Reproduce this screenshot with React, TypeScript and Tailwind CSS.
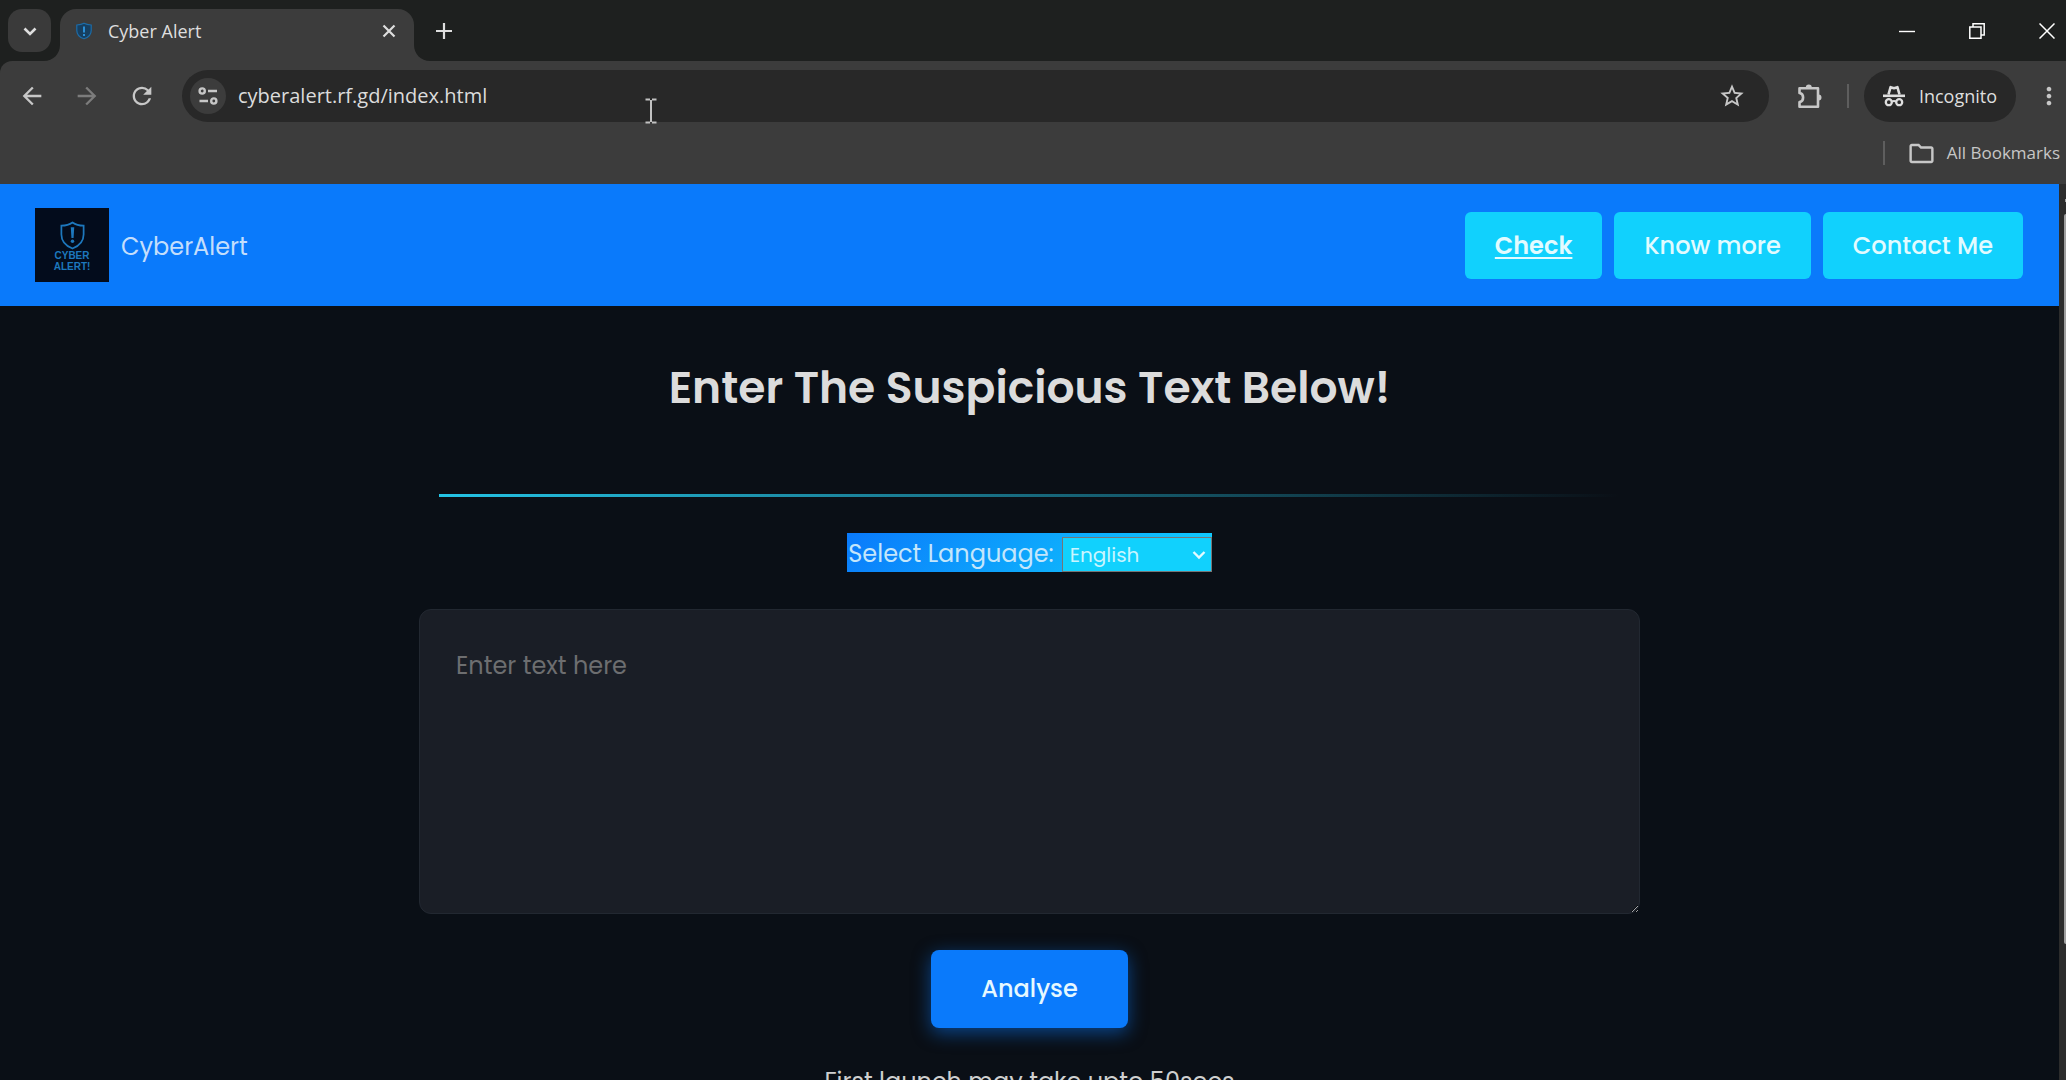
import { useState } from "react";
import {
  MdArrowBack,
  MdArrowForward,
  MdMoreVert,
  MdOutlineFolder,
  MdRefresh,
  MdStarBorder,
} from "react-icons/md";

const NAV_LINKS = [
  { label: "Check", href: "#check", active: true },
  { label: "Know more", href: "#know-more", active: false },
  { label: "Contact Me", href: "#contact", active: false },
];

const LANGUAGES = ["English", "Hindi", "Marathi", "Gujarati"];

function ShieldIcon({ className }: { className?: string }) {
  return (
    <svg viewBox="0 0 26 30" fill="none" className={className}>
      <path
        d="M13 1.5C9.5 4 5.500 4.800 1.500 4.800V14C1.500 21 6.500 26 13 28.500C19.500 26 24.500 21 24.500 14V4.800C20.500 4.800 16.500 4 13 1.500Z"
        stroke="currentColor"
        strokeWidth="1.8"
      />
      <path d="M11.200 6.500h3.600l-.7 11h-2.200z" fill="currentColor" />
      <circle cx="13" cy="21" r="1.800" fill="currentColor" />
    </svg>
  );
}

function FaviconIcon() {
  return (
    <svg viewBox="0 0 18 18" fill="none" className="size-[18px] text-[#1c6ca8]">
      <path
        d="M9 1.200C6.500 2.500 4 2.800 1.800 3V8.500C1.800 12.500 4.800 15.500 9 16.800C13.200 15.500 16.200 12.500 16.200 8.500V3C14 2.800 11.500 2.500 9 1.200Z"
        fill="#173f60"
        stroke="currentColor"
        strokeWidth="1.200"
      />
      <path d="M9 4.500v6M9 12v2" stroke="#2b8fd6" strokeWidth="2" />
    </svg>
  );
}

function TuneIcon() {
  return (
    <svg viewBox="0 0 20 20" fill="none" stroke="currentColor" strokeWidth="2.400" className="size-5">
      <circle cx="4.200" cy="5" r="2.600" />
      <path d="M10 5H19M1.500 15h8.500" />
      <circle cx="15.800" cy="15" r="2.600" />
    </svg>
  );
}

function PuzzleIcon() {
  return (
    <svg viewBox="0 0 26 26" fill="none" className="size-[26px]">
      <path
        d="M2.500 5.200h18.500v18.600H2.500v-4.800c4.800 -.7 4.800 -8.300 0-9V5.200z"
        stroke="currentColor"
        strokeWidth="2.600"
        strokeLinejoin="round"
      />
      <path d="M8.800 4.500a3 3 0 0 1 6 0zM21.500 11.500a3 3 0 0 1 0 6z" fill="currentColor" />
    </svg>
  );
}

function IncognitoIcon() {
  return (
    <svg viewBox="0 0 22 22" fill="none" stroke="currentColor" className="size-[22px]">
      <path d="M5.500 9.500L7.600 2.200L11 3.200L14.400 2.200L16.500 9.500" strokeWidth="2.600" strokeLinejoin="round" />
      <path d="M0 10.800h22" strokeWidth="2.600" />
      <circle cx="5.800" cy="17.200" r="3" strokeWidth="2.300" />
      <circle cx="16.200" cy="17.200" r="3" strokeWidth="2.300" />
      <path d="M8.800 16.700q2.200-1.400 4.400 0" strokeWidth="2" />
    </svg>
  );
}

// Concave foot on either side of the active tab
function TabFoot({ className }: { className: string }) {
  return (
    <svg viewBox="0 0 16 16" fill="#3c3c3c" className={className}>
      <path d="M16 0V16H0C9 16 16 9 16 0Z" />
    </svg>
  );
}

function TabStrip() {
  return (
    <div className="flex h-[61px] items-center bg-[#1e201f] pl-2 text-[#dedede]">
      <button
        aria-label="Search tabs"
        className="flex size-[43px] items-center justify-center rounded-[14px] bg-[#3a3a3a]"
      >
        <svg viewBox="0 0 14 14" fill="none" className="size-[14px]">
          <path d="M1.500 4.500L7 10L12.500 4.500" stroke="currentColor" strokeWidth="2.600" />
        </svg>
      </button>
      <div className="relative ml-[9px] flex h-[52px] w-[354px] items-center self-end rounded-t-2xl bg-[#3c3c3c] pr-[18px] pb-2 pl-[15px]">
        <TabFoot className="absolute bottom-0 -left-4 size-4" />
        <TabFoot className="absolute -right-4 bottom-0 size-4 -scale-x-100" />
        <FaviconIcon />
        <span className="ml-[15px] flex-1 text-lg">Cyber Alert</span>
        <button aria-label="Close tab">
          <svg viewBox="0 0 14 14" className="size-[14px]">
            <path d="M1.500 1.500l11 11M12.500 1.500l-11 11" stroke="currentColor" strokeWidth="2.200" />
          </svg>
        </button>
      </div>
      <button aria-label="New tab" className="ml-[22px]">
        <svg viewBox="0 0 16 16" className="size-4">
          <path d="M8 0v16M0 8h16" stroke="currentColor" strokeWidth="2.200" />
        </svg>
      </button>
      <div className="ml-auto flex gap-[54px] pr-[11px] text-white">
        <button aria-label="Minimize">
          <svg viewBox="0 0 16 16" className="size-4">
            <path d="M0 8.500h16" stroke="currentColor" strokeWidth="1.400" />
          </svg>
        </button>
        <button aria-label="Restore">
          <svg viewBox="0 0 16 16" fill="none" stroke="currentColor" strokeWidth="1.500" className="size-4">
            <path d="M.8 4h11.200v11.200H.8zM4 4V.8h11.200V12H12" />
          </svg>
        </button>
        <button aria-label="Close">
          <svg viewBox="0 0 16 16" className="size-4">
            <path d="M.5 .5l15 15M15.500 .5l-15 15" stroke="currentColor" strokeWidth="1.500" />
          </svg>
        </button>
      </div>
    </div>
  );
}

function Toolbar() {
  const [url, setUrl] = useState("cyberalert.rf.gd/index.html");

  return (
    <div className="bg-[#1e201f]">
      <div className="rounded-tl-xl bg-[#3c3c3c] pt-[9px] text-[#c7c7c7]">
        <div className="flex h-[52px] items-center">
          <div className="flex gap-[27px] pl-[18px]">
            <button aria-label="Back">
              <MdArrowBack className="size-7" />
            </button>
            <button aria-label="Forward" className="text-[#7c7c7c]">
              <MdArrowForward className="size-7" />
            </button>
            <button aria-label="Reload">
              <MdRefresh className="size-7" />
            </button>
          </div>
          <div className="ml-[26px] flex h-full flex-1 items-center rounded-full bg-[#282828] pr-[23px] pl-2">
            <button
              aria-label="View site information"
              className="flex size-9 items-center justify-center rounded-full bg-[#3c3c3c]"
            >
              <TuneIcon />
            </button>
            <input
              aria-label="Address"
              value={url}
              onChange={(e) => setUrl(e.target.value)}
              className="ml-3 min-w-0 flex-1 bg-transparent text-[20px] text-[#dcdcdc] outline-none"
            />
            <button aria-label="Bookmark this tab">
              <MdStarBorder className="size-7" />
            </button>
          </div>
          <button aria-label="Extensions" className="ml-7">
            <PuzzleIcon />
          </button>
          <div className="ml-6 h-6 w-[2px] bg-[#5e5e5e]" />
          <button className="ml-[15px] flex h-full items-center gap-[14px] rounded-full bg-[#282828] px-[19px] text-[#dedede]">
            <IncognitoIcon />
            <span className="text-lg">Incognito</span>
          </button>
          <button aria-label="Menu" className="mr-[3px] ml-[19px]">
            <MdMoreVert className="size-7" />
          </button>
        </div>
        <div className="flex h-[62px] items-center justify-end pr-[6px]">
          <div className="h-6 w-[2px] bg-[#5e5e5e]" />
          <button className="ml-[22px] flex items-center gap-[11px]">
            <MdOutlineFolder className="size-[29px]" />
            <span className="text-[17px]">All Bookmarks</span>
          </button>
        </div>
      </div>
    </div>
  );
}

function SiteHeader() {
  return (
    <header className="flex h-[122px] items-center justify-between bg-[#0a7afb] pr-9 pl-[35px]">
      <a href="#home" className="flex items-center gap-3 text-[24px] text-[#c4defb]">
        <span className="flex size-[74px] flex-col items-center justify-center bg-[#030c1c] pt-[3px] text-[#1d78bd]">
          <ShieldIcon className="h-[29px] w-[27px]" />
          <span className="text-center font-['Liberation_Sans',sans-serif] text-[10px] leading-[11px] font-bold">
            CYBER
            <br />
            ALERT!
          </span>
        </span>
        <span className="pt-1">CyberAlert</span>
      </a>
      <nav className="flex gap-3">
        {NAV_LINKS.map((link) => (
          <a
            key={link.label}
            href={link.href}
            className={
              link.active
                ? "rounded-md bg-[#11d1fd] px-[30px] pt-[17px] pb-4 text-[24px] leading-[34px] font-semibold text-[#e2fbff] underline decoration-2 underline-offset-3"
                : "rounded-md bg-[#11d1fd] px-[30px] pt-[17px] pb-4 text-[24px] leading-[34px] font-medium text-[#e2fbff]"
            }
          >
            {link.label}
          </a>
        ))}
      </nav>
    </header>
  );
}

function CheckForm() {
  const [language, setLanguage] = useState("English");
  const [text, setText] = useState("");

  return (
    <main className="mx-auto flex w-full max-w-[1221px] flex-col items-center">
      <h1 className="mt-12 text-[44px] leading-[68px] font-semibold text-[#dcdcdc]">
        Enter The Suspicious Text Below!
      </h1>
      <div className="mt-[72px] w-full px-5">
        <div className="h-[3px] bg-linear-to-r from-[#24c4e6] to-transparent" />
      </div>
      <div className="mt-9 flex h-[39px] items-end bg-linear-[135deg] from-[#0a7afb] to-[#11d1fd] text-[#c4e6fb]">
        <label htmlFor="language" className="pr-2 pl-px text-[24px] leading-[37px]">
          Select Language:
        </label>
        <div className="relative">
          <select
            id="language"
            value={language}
            onChange={(e) => setLanguage(e.target.value)}
            className="block h-[35px] w-[150px] appearance-none border border-[#767676] bg-[#11d1fd] pl-[7px] text-[20px] text-[#c9f5ff] outline-none"
          >
            {LANGUAGES.map((name) => (
              <option key={name}>{name}</option>
            ))}
          </select>
          <svg
            viewBox="0 0 14 14"
            fill="none"
            className="pointer-events-none absolute top-[11px] right-[6px] size-[14px] text-[#e2fbff]"
          >
            <path d="M1.500 4L7 9.500L12.500 4" stroke="currentColor" strokeWidth="2.400" />
          </svg>
        </div>
      </div>
      <textarea
        aria-label="Suspicious text"
        value={text}
        onChange={(e) => setText(e.target.value)}
        placeholder="Enter text here"
        className="mt-[37px] h-[305px] w-full resize rounded-xl border border-[#222831] bg-[#1a1e26] px-9 py-9 text-[24px] leading-[40px] text-[#dcdcdc] outline-none placeholder:text-[#6d6e70]"
      />
      <button className="mt-9 rounded-lg bg-[#0a7afb] px-[50px] py-5 text-[24px] leading-[38px] font-medium text-[#e6f8ff] shadow-[0_5px_18px_rgba(10,122,251,0.5)]">
        Analyse
      </button>
      <p className="mt-9 text-[24px] leading-[36px] text-[#cfcfcf]">First launch may take upto 50secs</p>
    </main>
  );
}

function Scrollbar() {
  return (
    <div className="flex w-[7px] shrink-0 flex-col items-end bg-[#2c2c2c] pt-[15px]">
      <div className="h-[3px] w-px bg-[#9f9f9f]" />
      <div className="mt-3 h-[84%] max-h-[730px] w-[2px] rounded-l-sm bg-[#9f9f9f]" />
    </div>
  );
}

export default function App() {
  return (
    <div className="relative flex h-screen flex-col overflow-hidden bg-[#0a0f16] font-['Segoe_UI','Open_Sans',sans-serif]">
      <TabStrip />
      <Toolbar />
      <div className="flex min-h-0 flex-1">
        <div className="min-w-0 flex-1 overflow-hidden font-['Poppins','Inter',sans-serif]">
          <SiteHeader />
          <CheckForm />
        </div>
        <Scrollbar />
      </div>
      {/* Text cursor hovering over the address bar */}
      <svg
        viewBox="0 0 12 26"
        fill="none"
        className="pointer-events-none absolute top-[98px] left-[645px] h-[26px] w-3"
      >
        <path d="M.5 1.500H5M7 1.500h4.500M6 2v22M.5 24.500H5M7 24.500h4.500" stroke="#c2c2c2" strokeWidth="2" />
      </svg>
    </div>
  );
}
